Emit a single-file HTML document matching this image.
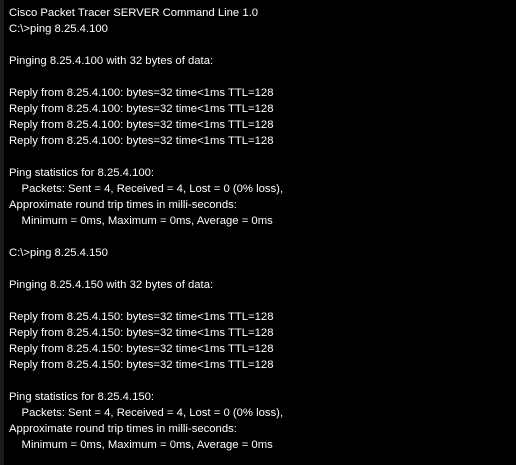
<!DOCTYPE html>
<html><head><style>
html,body{margin:0;padding:0;background:#000;width:516px;height:465px;overflow:hidden}
body{border-left:4px solid #1c1c1c;box-sizing:border-box}
pre{margin:0;padding:5px 0 0 5px;color:#fff;font-family:"Liberation Sans",sans-serif;font-size:11.3px;line-height:16px;white-space:pre}
</style></head><body><pre>Cisco Packet Tracer SERVER Command Line 1.0
C:\&gt;ping 8.25.4.100

Pinging 8.25.4.100 with 32 bytes of data:

Reply from 8.25.4.100: bytes=32 time&lt;1ms TTL=128
Reply from 8.25.4.100: bytes=32 time&lt;1ms TTL=128
Reply from 8.25.4.100: bytes=32 time&lt;1ms TTL=128
Reply from 8.25.4.100: bytes=32 time&lt;1ms TTL=128

Ping statistics for 8.25.4.100:
    Packets: Sent = 4, Received = 4, Lost = 0 (0% loss),
Approximate round trip times in milli-seconds:
    Minimum = 0ms, Maximum = 0ms, Average = 0ms

C:\&gt;ping 8.25.4.150

Pinging 8.25.4.150 with 32 bytes of data:

Reply from 8.25.4.150: bytes=32 time&lt;1ms TTL=128
Reply from 8.25.4.150: bytes=32 time&lt;1ms TTL=128
Reply from 8.25.4.150: bytes=32 time&lt;1ms TTL=128
Reply from 8.25.4.150: bytes=32 time&lt;1ms TTL=128

Ping statistics for 8.25.4.150:
    Packets: Sent = 4, Received = 4, Lost = 0 (0% loss),
Approximate round trip times in milli-seconds:
    Minimum = 0ms, Maximum = 0ms, Average = 0ms</pre></body></html>
